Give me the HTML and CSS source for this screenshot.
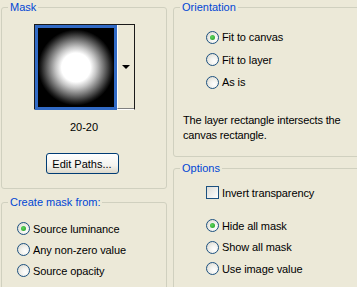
FILE: index.html
```html
<!DOCTYPE html>
<html>
<head>
<meta charset="utf-8">
<link rel="stylesheet" href="styles.css">
</head>
<body>
<div class="page">
  <div class="col">
    <fieldset class="group mask">
      <legend>Mask</legend>
      <div class="thumb">
        <div class="thumb-img"><div class="grad"></div></div>
        <div class="thumb-drop"><span class="arrow"></span></div>
      </div>
      <div class="thumb-name">20-20</div>
      <button class="btn">Edit Paths...</button>
    </fieldset>
    <fieldset class="group create">
      <legend>Create mask from:</legend>
      <div class="opts left-opts">
        <label class="opt"><span class="radio on"></span>Source luminance</label>
        <label class="opt"><span class="radio"></span>Any non-zero value</label>
        <label class="opt"><span class="radio"></span>Source opacity</label>
      </div>
    </fieldset>
  </div>
  <div class="col">
    <fieldset class="group orient">
      <legend>Orientation</legend>
      <div class="opts right-opts">
        <label class="opt wide"><span class="radio on"></span>Fit to canvas</label>
        <label class="opt wide"><span class="radio"></span>Fit to layer</label>
        <label class="opt wide"><span class="radio"></span>As is</label>
      </div>
      <p class="desc">The layer rectangle intersects the<br>canvas rectangle.</p>
    </fieldset>
    <fieldset class="group options">
      <legend>Options</legend>
      <div class="opts right-opts">
        <label class="opt"><span class="check"></span>Invert transparency</label>
        <div class="radios">
          <label class="opt"><span class="radio on"></span>Hide all mask</label>
          <label class="opt"><span class="radio"></span>Show all mask</label>
          <label class="opt"><span class="radio"></span>Use image value</label>
        </div>
      </div>
    </fieldset>
  </div>
</div>
</body>
</html>
```
FILE: styles.css
```css
html, body {
  margin: 0;
  padding: 0;
  background: #ece9d8;
  width: 357px;
  height: 287px;
  overflow: hidden;
  font-family: "Liberation Sans", Arial, sans-serif;
  font-size: 11px;
  color: #000;
}
.page {
  display: grid;
  grid-template-columns: 166px 190px;
  column-gap: 6px;
  padding: 1px 0 0 1px;
  height: 286px;
  overflow: hidden;
}
.col {
  display: flex;
  flex-direction: column;
  min-height: 0;
}
.group {
  margin: 0;
  padding: 0;
  min-width: 0;
  border: 1px solid #d0d0bf;
  border-radius: 3px;
  flex: none;
}
.group legend {
  margin-left: 6px;
  padding: 0 2px;
  color: #0046d5;
  line-height: 13px;
  font-size: 11px;
}
.mask {
  height: 186px;
  display: flex;
  flex-direction: column;
  align-items: center;
}
.create {
  margin-top: 7px;
  height: 110px;
}
.orient {
  height: 154px;
}
.options {
  margin-top: 5px;
  height: 140px;
}
.thumb {
  margin-top: 10px;
  display: flex;
  width: 101px;
  height: 86px;
  box-sizing: border-box;
  border: 1px solid #1a1a1a;
  border-bottom-color: #fff;
}
.thumb-img {
  width: 82px;
  height: 85px;
  box-sizing: border-box;
  border: 3px solid #316ac5;
  background: #000;
}
.grad {
  width: 100%;
  height: 100%;
  background: radial-gradient(circle closest-side, #fff 0%, #fff 38%, #c4c4c4 54%, #727272 73%, #1e1e1e 92%, #000 100%);
}
.thumb-drop {
  flex: 1;
  display: flex;
  align-items: center;
  justify-content: center;
  border-left: 1px solid #fff;
  border-bottom: 1px solid #808080;
}
.arrow {
  width: 0;
  height: 0;
  border-left: 4px solid transparent;
  border-right: 4px solid transparent;
  border-top: 4px solid #000;
  margin-left: 1px;
}
.thumb-name {
  margin-top: 11px;
  line-height: 13px;
}
.btn {
  margin-top: 19px;
  width: 73px;
  height: 21px;
  padding: 0;
  font-family: inherit;
  font-size: 11px;
  color: #000;
  border: 1px solid #003c74;
  border-radius: 3px;
  background: linear-gradient(#ffffff, #f4f3ee 60%, #dcd8ca);
  margin-left: -4px;
}
.opts {
  display: flex;
  flex-direction: column;
}
.left-opts {
  padding: 9px 0 0 15px;
}
.right-opts {
  padding: 7px 0 0 32px;
}
.orient .right-opts {
  padding-top: 12px;
}
.opt {
  display: flex;
  align-items: center;
  gap: 3px;
  height: 21px;
  white-space: nowrap;
  letter-spacing: -0.1px;
}
.opt.wide {
  height: 22.5px;
}
.radios {
  display: flex;
  flex-direction: column;
  margin-top: 12px;
}
.radios .opt {
  height: 21.5px;
}
.radio {
  width: 13px;
  height: 13px;
  box-sizing: border-box;
  border-radius: 50%;
  border: 1px solid #1c5180;
  background: radial-gradient(circle at 65% 65%, #ffffff 0%, #f2f2ee 40%, #d6d3c8 100%);
  display: flex;
  align-items: center;
  justify-content: center;
  flex: none;
}
.radio.on::after {
  content: "";
  width: 5px;
  height: 5px;
  border-radius: 50%;
  background: radial-gradient(circle at 40% 40%, #5fd55f, #1e9a1e);
}
.check {
  width: 13px;
  height: 13px;
  box-sizing: border-box;
  border: 1px solid #1c5180;
  background: linear-gradient(135deg, #dcdcd7, #ffffff);
  flex: none;
}
.desc {
  margin: 19px 0 0 9px;
  line-height: 15px;
  letter-spacing: -0.15px;
}
```
